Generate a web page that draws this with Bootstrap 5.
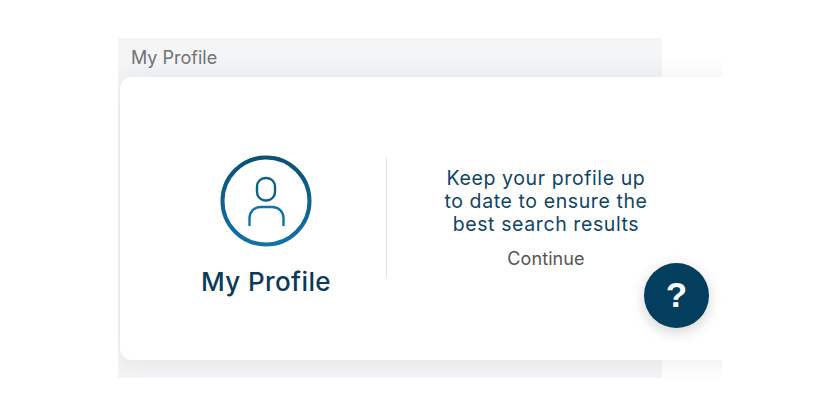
<!DOCTYPE html>
<html lang="en">

<head>
  <meta charset="UTF-8" />
  <meta name="viewport" content="width=device-width, initial-scale=1.0"/>
  <title>My Profile</title>
  <link href="https://cdn.jsdelivr.net/npm/bootstrap@5.3.0/dist/css/bootstrap.min.css" rel="stylesheet" />
  <style>
    body {
      background: #fff;
      font-family: "Inter", "Liberation Sans", sans-serif;
    }
    .profile-stage {
      width: 604px;
      height: 340px;
      margin: 38px 0 0 118px;
      overflow: hidden;
      background: linear-gradient(to right, #f4f5f7 544px, transparent 544px);
    }
    .stage-title {
      height: 39px;
      padding: 8px 0 0 13px;
      color: #707274;
      font-size: 18px;
      line-height: 24px;
    }
    .promo-card {
      width: 640px;
      height: 283px;
      margin-left: 2px;
      padding-left: 26px;
      border-radius: 12px;
      background: #fff;
      box-shadow: 0 2px 26px rgba(20, 30, 40, .09);
    }
    .promo-left {
      width: 240px;
      margin-top: 15px;
    }
    .promo-name {
      margin: 19px 0 0;
      color: #0b3a58;
      font-size: 26px;
      font-weight: 500;
      line-height: 32px;
      letter-spacing: .4px;
    }
    .promo-rule {
      width: 1px;
      height: 120px;
      margin-bottom: 3px;
      background: #dfe1e3;
    }
    .promo-right {
      width: 318px;
    }
    .promo-text {
      margin: 0 0 11px;
      color: #0f4565;
      font-size: 19.5px;
      line-height: 23px;
      letter-spacing: .6px;
    }
    .promo-link {
      color: #555;
      font-size: 18px;
      line-height: 24px;
      letter-spacing: .1px;
      text-decoration: none;
    }
    .help-btn {
      position: absolute;
      left: 644px;
      top: 263px;
      width: 65px;
      height: 65px;
      padding: 0 0 2px;
      border: 0;
      background: #033e5f;
      color: #fff;
      font-family: "Liberation Sans", sans-serif;
      font-size: 35px;
      font-weight: 700;
      line-height: 1;
      box-shadow: 0 4px 14px rgba(0, 0, 0, .18);
    }
  </style>
</head>

<body>

<!-- Profile panel -->
<div class="profile-stage">
  <div class="stage-title">My Profile</div>
  <div class="promo-card d-flex align-items-center">
    <div class="promo-left d-flex flex-column align-items-center">
      <svg width="92" height="92" viewBox="0 0 92 92" fill="none" aria-hidden="true">
        <defs>
          <linearGradient id="ringGrad" x1="0" y1="0" x2="0" y2="1">
            <stop offset="0" stop-color="#0b5273"/>
            <stop offset="1" stop-color="#1272a6"/>
          </linearGradient>
        </defs>
        <circle cx="46" cy="46" r="43.5" stroke="url(#ringGrad)" stroke-width="4"/>
        <rect x="37" y="23" width="18" height="22.5" rx="8.5" stroke="#0f5f86" stroke-width="2.4"/>
        <path d="M29.5 71v-8a11 11 0 0 1 11-11h12a11 11 0 0 1 11 11v8" stroke="#1272a6" stroke-width="2.4"/>
      </svg>
      <h2 class="promo-name">My Profile</h2>
    </div>
    <div class="promo-rule"></div>
    <div class="promo-right text-center">
      <p class="promo-text">Keep your profile up<br>to date to ensure the<br>best search results</p>
      <a class="promo-link" href="#">Continue</a>
    </div>
  </div>
</div>

<button class="help-btn rounded-circle d-flex align-items-center justify-content-center" type="button">?</button>

<script src="https://cdn.jsdelivr.net/npm/bootstrap@5.3.0/dist/js/bootstrap.bundle.min.js"></script>
</body>
</html>
